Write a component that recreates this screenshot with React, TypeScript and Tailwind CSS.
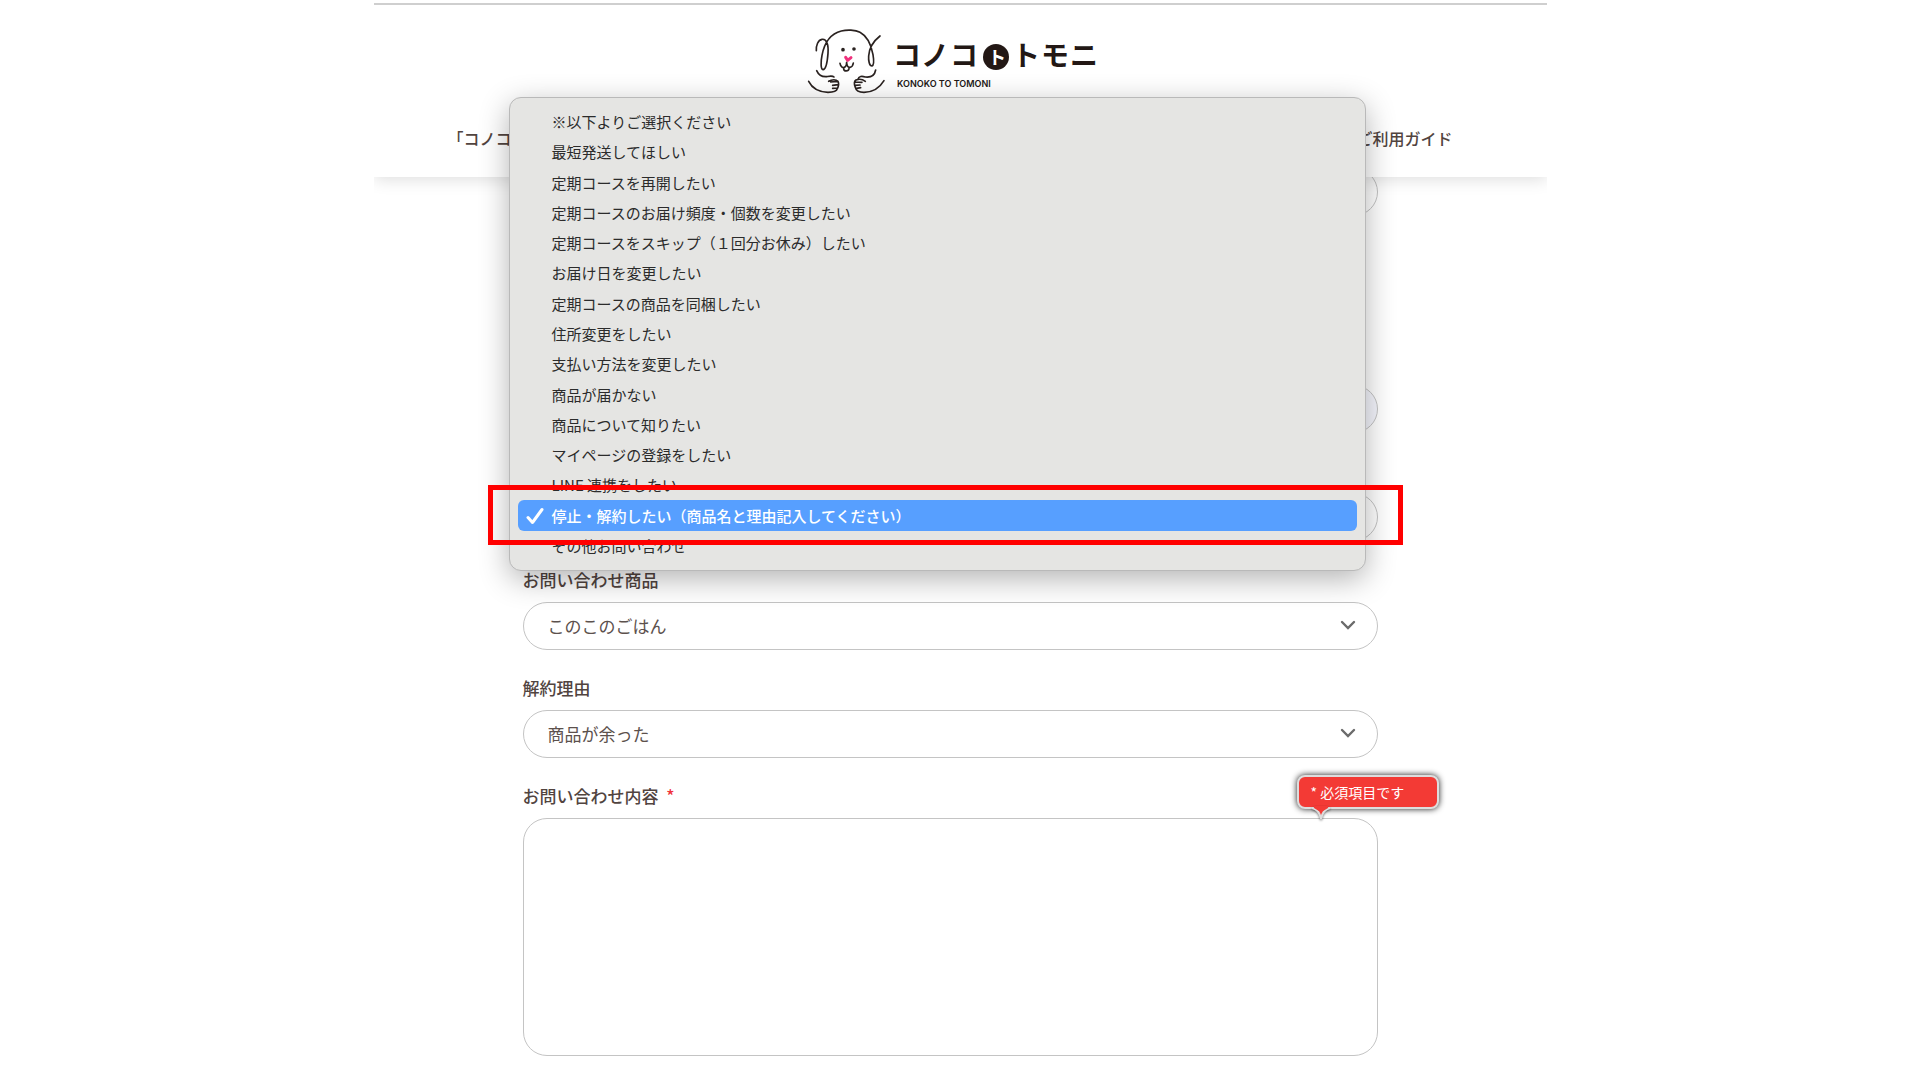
import { useState, type ReactNode } from "react";

const topics = [
  "※以下よりご選択ください",
  "最短発送してほしい",
  "定期コースを再開したい",
  "定期コースのお届け頻度・個数を変更したい",
  "定期コースをスキップ（１回分お休み）したい",
  "お届け日を変更したい",
  "定期コースの商品を同梱したい",
  "住所変更をしたい",
  "支払い方法を変更したい",
  "商品が届かない",
  "商品について知りたい",
  "マイページの登録をしたい",
  "LINE 連携をしたい",
  "停止・解約したい（商品名と理由記入してください）",
  "その他お問い合わせ",
];

const control =
  "block h-12 w-full appearance-none rounded-full border border-[#c4c4c4] bg-white pr-12 pl-6 text-[17px] text-[#5c514d]";

function Logo() {
  return (
    <svg viewBox="0 0 300 80" className="h-20 w-[300px]" role="img" aria-label="コノコトトモニ">
      {/* dog */}
      <g transform="scale(0.3333)" fill="none" stroke="#2a2220" strokeWidth="5" strokeLinecap="round" strokeLinejoin="round">
        <path d="M49 92C48 76 54 60 66 58C80 56 86 74 84 100C82 128 76 148 69 149C62 148 62 126 66 106C72 74 88 42 124 33C140 29 166 29 180 37C204 50 214 76 219 104C222 122 222 136 216 138C208 138 205 122 206 108C208 82 222 62 240 48" />
        <path d="M120 130C122 142 130 146 136 140C140 136 140 130 140 127C140 138 144 143 150 142C156 141 159 136 160 129" />
        <path d="M131 146C131 155 146 155 147 146" />
        <path d="M50 152C56 166 66 171 80 170C90 168 97 166 102 171" />
        <path d="M26 184C36 204 58 216 84 217C100 217 110 214 112 206C116 198 116 188 114 184C108 178 96 178 86 184M92 186L112 184M98 196L114 194M98 205L112 204" />
        <path d="M227 150C224 166 212 173 196 171C186 168 176 168 174 178" />
        <path d="M252 182C240 202 220 217 192 217C178 217 168 212 166 202C162 192 162 184 168 180C178 176 188 178 196 184M166 186L186 187M166 196L180 195M170 205L182 203" />
        <circle cx="129" cy="89" r="3" fill="#2a2220" />
        <circle cx="162" cy="87" r="3" fill="#2a2220" />
        <path d="M137 112L143 121L153 113" stroke="#f0307c" strokeWidth="9" />
      </g>
      <circle cx="196" cy="37" r="13" fill="#231815" />
      <g fill="#231815" className="font-['Noto_Sans_CJK_JP',sans-serif] font-bold" fontSize="28" textAnchor="middle">
        <text x="107" y="46">コ</text>
        <text x="135" y="46">ノ</text>
        <text x="164" y="46">コ</text>
        <text x="197" y="44" fontSize="18" fill="#fff">ト</text>
        <text x="226" y="46">ト</text>
        <text x="255" y="46">モ</text>
        <text x="284" y="46">ニ</text>
      </g>
      <text x="97" y="67" fontSize="9" fill="#231815" className="font-['Inter',sans-serif] font-semibold">
        KONOKO TO TOMONI
      </text>
    </svg>
  );
}

function Chevron() {
  return (
    <svg
      viewBox="0 0 16 10"
      className="pointer-events-none absolute top-[18px] right-[22px] h-[10px] w-4"
      fill="none"
      stroke="#6b6b6b"
      strokeWidth="2.4"
      strokeLinecap="round"
    >
      <path d="M2 2L8 8L14 2" />
    </svg>
  );
}

function Field({ id, label, children }: { id: string; label: ReactNode; children: ReactNode }) {
  return (
    <div className="relative">
      <label htmlFor={id} className="mb-2 block h-6 text-[17px] leading-5 font-medium">
        {label}
      </label>
      {children}
    </div>
  );
}

function TopicMenu({ value, onPick }: { value: number; onPick: (i: number) => void }) {
  return (
    <ul
      role="listbox"
      aria-label="お問い合わせ種別"
      className="absolute right-3 -bottom-[30px] -left-[14px] z-20 flex h-[474px] flex-col rounded-xl border border-[#b9b9b9] bg-[#e5e5e3] px-2 py-[9px] text-[15px] text-[#2b2b2b] shadow-[0_8px_30px_rgba(0,0,0,0.3)]"
    >
      {topics.map((t, i) => (
        <li
          key={t}
          role="option"
          aria-selected={i === value}
          onClick={() => onPick(i)}
          className={
            i === value
              ? "flex flex-1 items-center rounded-md bg-[#579fff] font-medium text-white"
              : "flex flex-1 items-center"
          }
        >
          <span className="flex w-[34px] justify-center">
            {i === value && (
              <svg viewBox="0 0 18 18" className="h-[18px] w-[18px]" fill="none" stroke="#fff" strokeWidth="3" strokeLinecap="round" strokeLinejoin="round">
                <path d="M2 10.500L6.500 15.500L16 2.500" />
              </svg>
            )}
          </span>
          <span className="leading-5">{t}</span>
        </li>
      ))}
    </ul>
  );
}

export default function App() {
  const [topic, setTopic] = useState(13);
  return (
    <div className="min-h-screen bg-white pt-[3px] font-['Noto_Sans_CJK_JP',sans-serif] text-[#51443f]">
      <div className="mx-auto w-full max-w-[1173px] overflow-hidden pb-6">
        <header className="relative z-10 border-t-2 border-[#cfcfcf] bg-white pt-[15px] pb-[27px] shadow-[0_2px_16px_rgba(0,0,0,0.14)]">
          <div className="flex justify-center pr-[21px] pl-0">
            <Logo />
          </div>
          <nav className="mt-[26px] flex h-6 justify-between pr-[94px] pl-[74px] text-base leading-6 font-medium">
            <a href="#about">「コノコ</a>
            <a href="#guide">ご利用ガイド</a>
          </nav>
        </header>

        <main className="-mt-[9px] pr-5">
          <form className="mx-auto w-full max-w-[855px]">
            <input aria-label="お名前" className={control} />
            <div className="mt-[169px]">
              <input aria-label="メールアドレス" className="block h-12 w-full rounded-full border border-[#c4c4c4] bg-[#f5f6fd] px-6" />
            </div>
            <div className="relative mt-[60px]">
              <select
                aria-label="お問い合わせ種別"
                className={control}
                value={topic}
                onChange={(e) => setTopic(Number(e.target.value))}
              >
                {topics.map((t, i) => (
                  <option key={t} value={i}>
                    {t}
                  </option>
                ))}
              </select>
              <TopicMenu value={topic} onPick={setTopic} />
              <div className="pointer-events-none absolute -top-2 -right-[25px] -left-[35px] z-30 h-[60px] border-5 border-[#ff0000]" />
            </div>

            <div className="mt-[29px] flex flex-col gap-7">
              <Field id="product" label="お問い合わせ商品">
                <div className="relative">
                  <select id="product" className={control}>
                    <option>このこのごはん</option>
                  </select>
                  <Chevron />
                </div>
              </Field>
              <Field id="reason" label="解約理由">
                <div className="relative">
                  <select id="reason" className={control}>
                    <option>商品が余った</option>
                  </select>
                  <Chevron />
                </div>
              </Field>
              <Field
                id="content"
                label={
                  <>
                    お問い合わせ内容 <span className="ml-1 text-[#f0323c]">*</span>
                  </>
                }
              >
                <textarea
                  id="content"
                  aria-describedby="content-error"
                  className="block h-[238px] w-full resize-none rounded-3xl border border-[#c4c4c4] bg-white px-6 py-4 text-[17px]"
                />
                <div
                  id="content-error"
                  role="alert"
                  className="absolute -top-[11px] -right-[61px] h-[34px] w-[142px] rounded-lg border-2 border-[#dddddd] bg-[#f33a35] pl-3 text-sm leading-[30px] text-white shadow-[0_0_6px_rgba(0,0,0,0.9)]"
                >
                  * 必須項目です
                  <svg
                    viewBox="0 0 20 14"
                    className="absolute top-[29px] left-3 h-[14px] w-5 overflow-visible drop-shadow-[0_1px_1px_rgba(0,0,0,0.5)]"
                  >
                    <path d="M1 2C6 3 9 7 10 13C11 7 14 3 19 2" fill="#f33a35" stroke="#dddddd" strokeWidth="2" />
                    <path d="M3 0H17V2L12 5H8L3 2Z" fill="#f33a35" />
                  </svg>
                </div>
              </Field>
            </div>
          </form>
        </main>
      </div>
    </div>
  );
}
